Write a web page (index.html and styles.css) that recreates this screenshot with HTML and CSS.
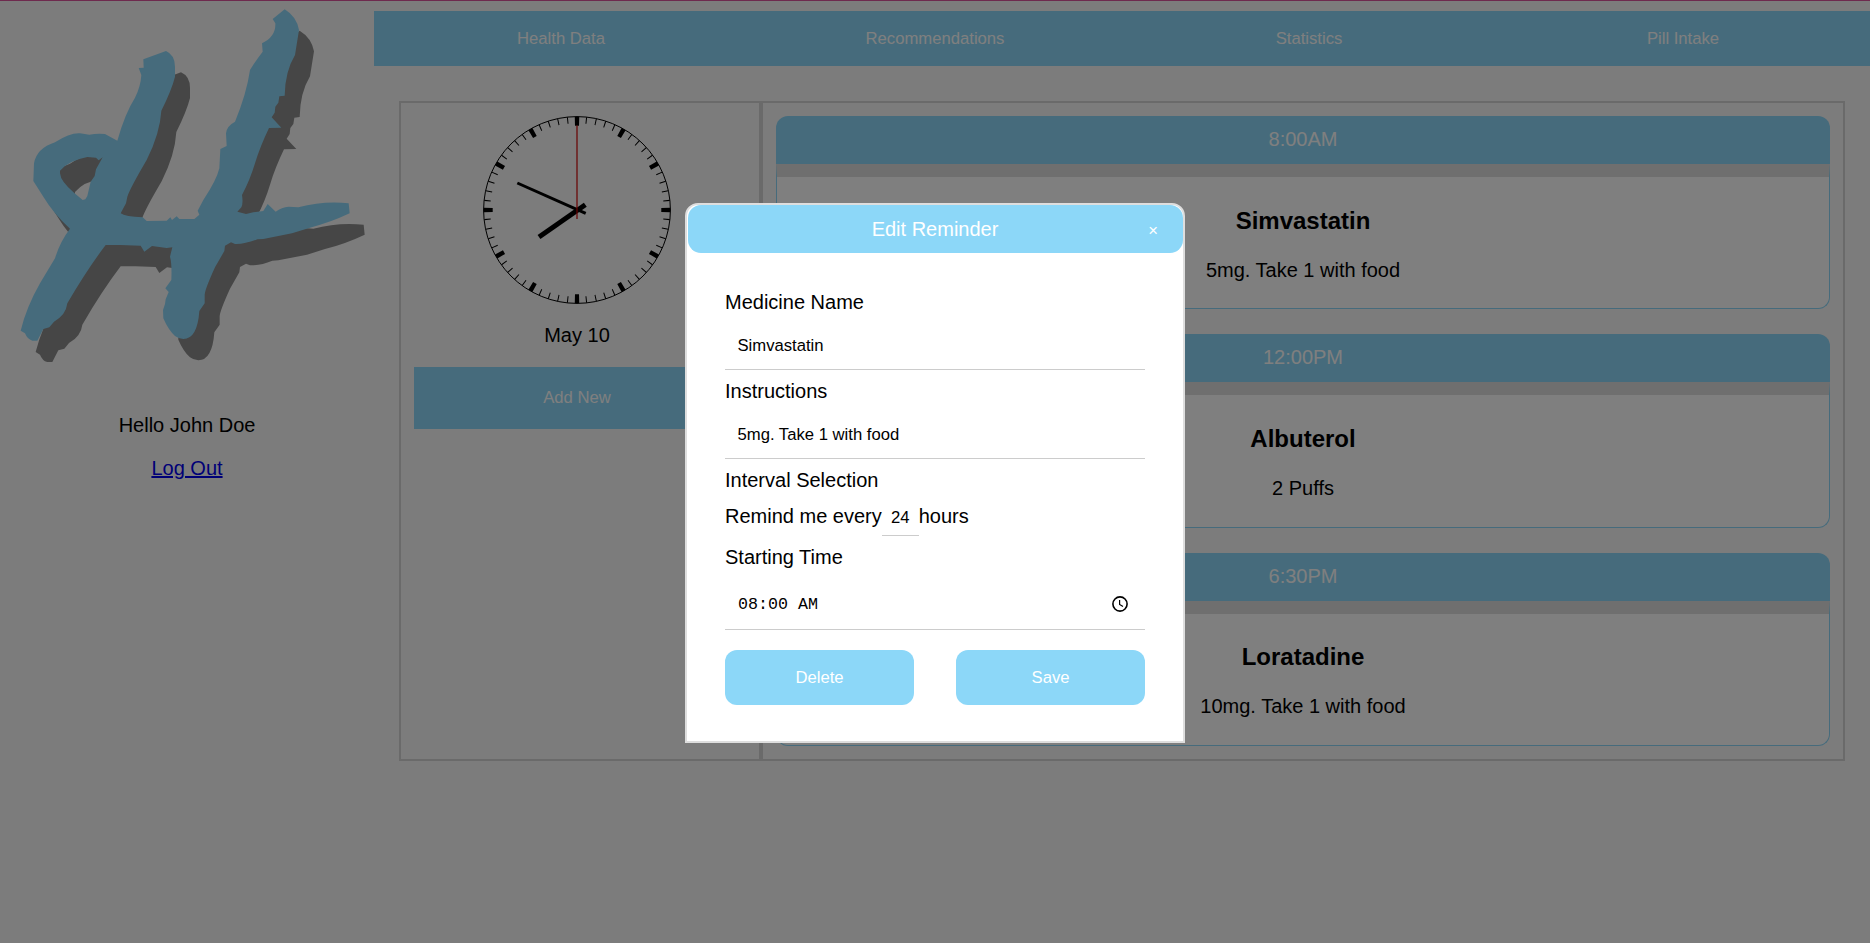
FILE: index.html
```html
<!DOCTYPE html>
<html lang="en">
<head>
<meta charset="utf-8">
<title>Pill Intake</title>
<link rel="stylesheet" href="styles.css">
</head>
<body>
<div class="page">
  <aside class="sidebar">
    <svg class="logo" viewBox="0 0 1140 1140" aria-label="H logo">
      <defs>
        <path id="h" fill-rule="evenodd" d="M854,28Q890,50 897,90L885,165Q855,215 854,287L838,289L835,308L826,320L824,338L815,352L844,383L807,384Q780,440 765,490Q750,540 726,585Q730,610 724,622L712,635L738,642L760,637L790,633L803,612L827,635Q845,622 866,620L895,622Q970,602 1046,610L1049,640Q990,668 930,683L876,700L790,717L772,718Q735,733 705,732L693,727L675,737L673,753L645,802Q614,870 614,885L614,910L598,933Q592,1017 550,1017Q535,1016 525,1008Q505,990 490,955L489,930L495,912L497,898L506,876L496,865L514,840Q516,790 510,770L517,742L500,744L456,738L433,755L422,737L362,735L317,735Q260,810 202,910Q198,945 162,965L148,982L130,987L112,1022L97,1022Q82,1018 75,1000L62,992Q80,920 120,850L165,775Q180,725 210,686Q160,640 130,590L100,543L102,490Q110,445 165,427Q210,398 240,400L268,404Q290,400 315,402L352,422Q375,340 405,293Q422,260 424,225L416,204L431,203L430,178L498,153Q525,165 525,200L525,230Q515,270 484,332Q480,400 440,480Q390,565 382,590L378,610L362,640Q375,650 428,652L440,663L500,662L511,652L516,660L530,649L538,657L583,657L598,644L593,632L610,600Q650,540 658,505L661,447L680,438L678,400Q680,378 705,365Q740,280 750,210Q765,185 788,155L786,130Q828,110 826,70L818,57ZM180,512Q205,482 262,471L288,473L296,481L308,472L288,508L284,528L272,545L262,588L256,598L248,600L222,578Q182,545 180,520Z"/>
      </defs>
      <use href="#h" x="45" y="64" class="logo-shadow"/>
      <use href="#h" class="logo-face"/>
    </svg>
    <p class="hello">Hello John Doe</p>
    <a class="logout" href="#">Log Out</a>
  </aside>
  <main class="main">
    <nav class="nav"><a>Health Data</a><a>Recommendations</a><a>Statistics</a><a>Pill Intake</a></nav>
    <div class="board">
      <section class="today">
        <svg class="clock" viewBox="-95 -95 190 190">
          <circle r="93.4" class="rim"/>
          <circle r="90" class="minutes" pathLength="600"/>
          <circle r="88.8" class="hours" pathLength="1200"/>
          <path d="M-38 27L8.3-5.3" class="hour-hand"/>
          <path d="M-59.7-27L8.7 3.3" class="minute-hand"/>
          <path d="M0-84.5V9" class="second-hand"/>
        </svg>
        <p class="date">May 10</p>
        <button class="add">Add New</button>
      </section>
      <section class="list">
        <article class="card"><header>8:00AM</header><div class="card-body"><h3>Simvastatin</h3><p>5mg. Take 1 with food</p></div></article>
        <article class="card"><header>12:00PM</header><div class="card-body"><h3>Albuterol</h3><p>2 Puffs</p></div></article>
        <article class="card"><header>6:30PM</header><div class="card-body"><h3>Loratadine</h3><p>10mg. Take 1 with food</p></div></article>
      </section>
    </div>
  </main>
</div>
<div class="overlay">
  <div class="modal">
    <div class="modal-head"><span></span><span>Edit Reminder</span><span class="close">×</span></div>
    <div class="form">
      <label>Medicine Name</label>
      <div class="field">Simvastatin</div>
      <label>Instructions</label>
      <div class="field">5mg. Take 1 with food</div>
      <label>Interval Selection</label>
      <div class="interval"><span>Remind me every</span><span class="num">24</span><span>hours</span></div>
      <label>Starting Time</label>
      <div class="field time"><span>08:00 AM</span>
        <svg viewBox="0 0 16 16" class="time-icon"><circle cx="8" cy="8" r="7.1"/><path d="M7.6 4V8.4L11 10.6"/></svg>
      </div>
      <div class="actions"><button>Delete</button><button>Save</button></div>
    </div>
  </div>
</div>
</body>
</html>
```
FILE: styles.css
```css
* { box-sizing: border-box; }
body { margin: 0; background: #f8f8f8; color: #000; font: 20px/23px "Liberation Sans", Arial, sans-serif; height: 943px; overflow: hidden; }
p, h3 { margin: 0; }
button { border: 0; padding: 0; background: #8cd7f8; color: #fff; font: 16.67px/19px "Liberation Sans", Arial, sans-serif; }

.page { display: flex; height: 943px; border-top: 1px solid #dc549c; }

.sidebar { width: 374px; display: flex; flex-direction: column; align-items: center; }
.logo { width: 380px; height: 380px; margin: -1px 0 0 6px; flex: none; }
.logo-face { fill: #8cd7f8; }
.logo-shadow { fill: #8c8c8c; }
.hello { margin-top: 34px; }
.logout { margin-top: 20px; color: #0000ee; }

.main { flex: 1; padding-top: 10px; }
.nav { display: flex; height: 55px; background: #8cd7f8; color: #fff; font-size: 16.67px; line-height: 55px; text-align: center; }
.nav a { flex: 1; }

.board { display: flex; margin: 35px 25px 0; height: 660px; }
.today { width: 362px; border: 2px solid #d4d4d4; padding: 12px 19px 0 13px; display: flex; flex-direction: column; align-items: center; }
.clock { width: 190px; height: 190px; flex: none; }
.clock circle { fill: none; stroke: #000; }
.rim { stroke-width: 1; }
.clock .minutes { stroke-width: 6.5; stroke-dasharray: 1.06 8.94; stroke-dashoffset: .53; }
.clock .hours { stroke-width: 9; stroke-dasharray: 9.4 90.6; stroke-dashoffset: 4.7; }
.hour-hand { stroke: #000; stroke-width: 5; }
.minute-hand { stroke: #000; stroke-width: 3; }
.second-hand { stroke: #d00000; stroke-width: 1.2; }
.date { margin-top: 19px; }
.add { margin-top: 20px; width: 100%; height: 62px; padding-bottom: 1px; }

.list { flex: 1; border: 2px solid #d4d4d4; padding: 12.8px 13px 0; display: flex; flex-direction: column; gap: 25px; }
.card { height: 193.4px; flex: none; border-radius: 12px; }
.card header { height: 48px; background: #8cd7f8; color: #fff; text-align: center; line-height: 47.8px; border-radius: 12px 12px 0 0; }
.card-body { height: 145.4px; background: #fff; border: 1px solid #8cd7f8; border-top: 13px solid #dfdfdf; border-radius: 0 0 12px 12px; text-align: center; padding-top: 29.8px; }
.card h3 { font-size: 24px; line-height: 28px; margin-bottom: 24px; }

.overlay { position: fixed; inset: 0; background: rgba(0, 0, 0, .5); padding-top: 203px; }
.modal { width: 500px; height: 540px; margin: 0 auto; background: #fff; border: 2px solid #dedede; border-radius: 13px 13px 0 0; }
.modal-head { display: grid; grid-template-columns: 1fr auto 1fr; height: 48px; margin-left: 1px; padding-right: 1px; line-height: 48px; background: #8cd7f8; color: #fff; border-radius: 13px; }
.close { font-size: 16.67px; line-height: 51px; text-align: right; padding-right: 24px; }
.form { padding: 38px 38px 0; }
.form label { display: block; }
.field { height: 56px; margin-bottom: 10px; padding: 22px 12.5px 0; border-bottom: 1px solid #ccc; font-size: 16.67px; line-height: 19px; }
.interval { display: flex; height: 41px; margin-top: 13px; }
.num { width: 37px; height: 31px; font-size: 16.67px; line-height: 25px; text-align: center; border-bottom: 1px solid #ccc; }
.time { height: 61px; display: flex; justify-content: space-between; padding: 26px 17px 0 13px; font-family: "Liberation Mono", monospace; font-size: 16.67px; }
.time-icon { width: 16px; height: 16px; margin-top: 1px; fill: none; stroke: #000; stroke-width: 1.6; }
.time-icon path { stroke-width: 1.2; }
.actions { display: flex; justify-content: space-between; margin-top: 20px; }
.actions button { width: 189px; height: 55px; border-radius: 12px; }
```
